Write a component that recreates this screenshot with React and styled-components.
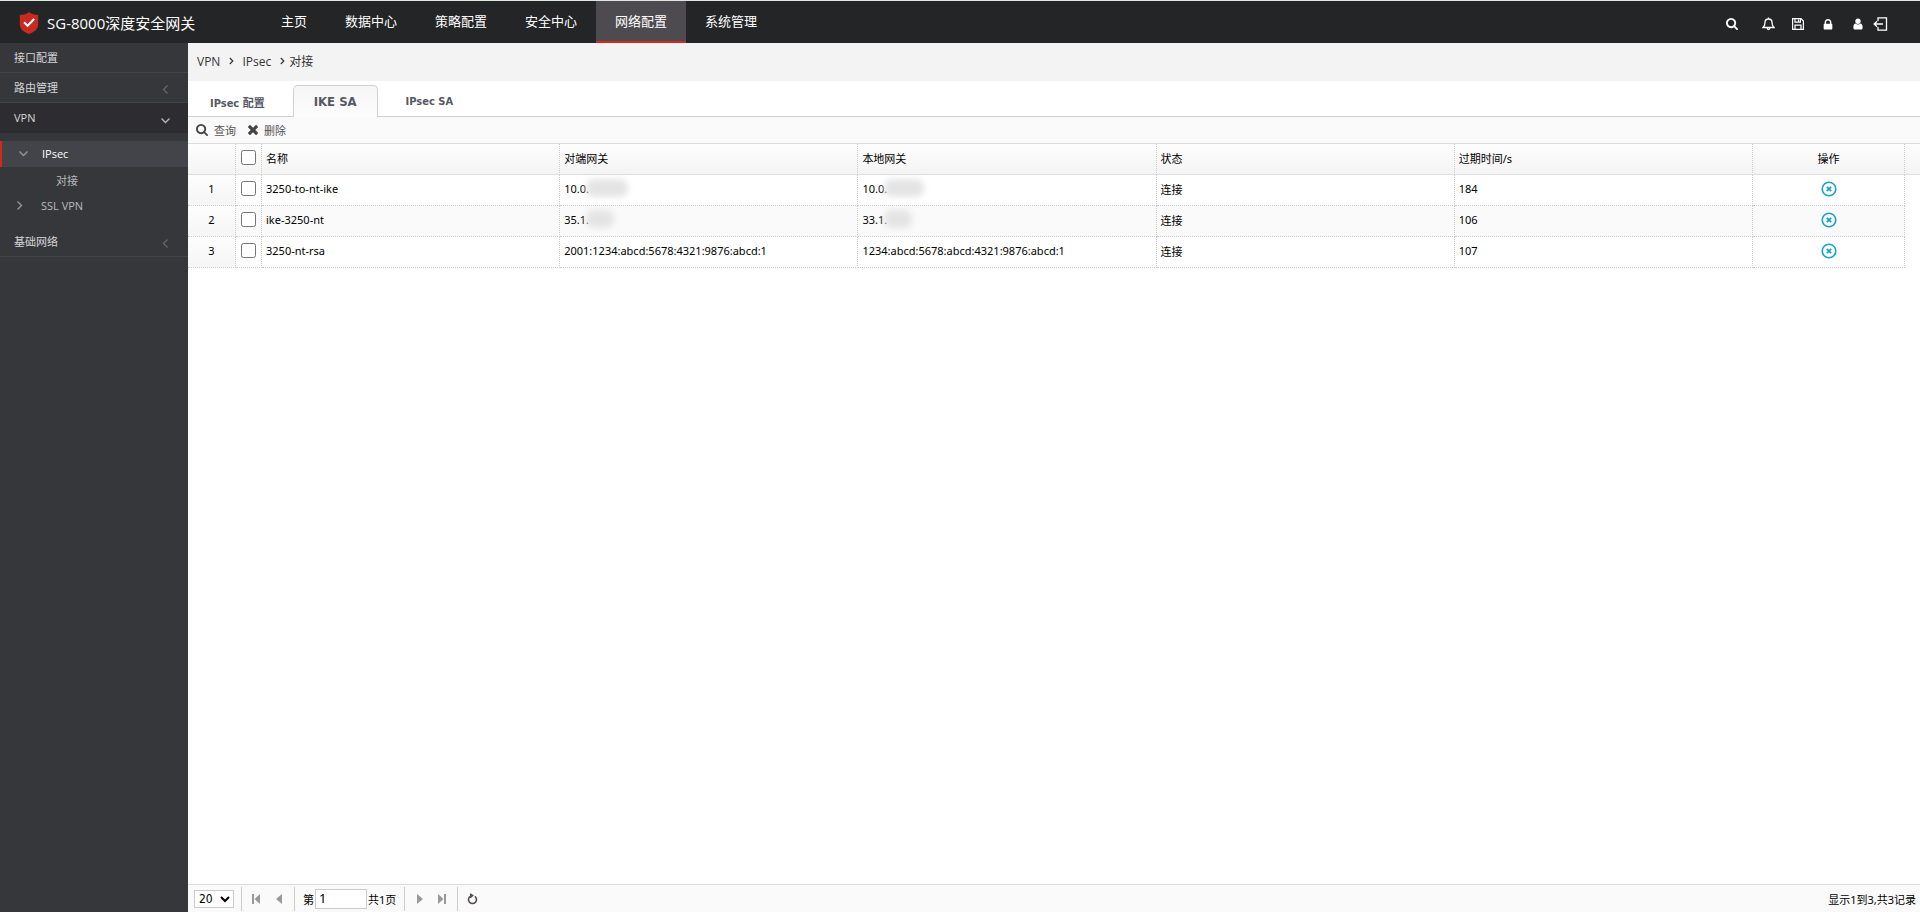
import { useState } from 'react';
import styled, { createGlobalStyle } from 'styled-components';

const GlobalStyle = createGlobalStyle`
    * { box-sizing: border-box; }
    body {
        margin: 0;
        font-family: "Noto Sans", "Noto Sans CJK SC", sans-serif;
        font-size: 11px;
        color: #000;
        background: #fff;
    }
    button, input, select { font-family: inherit; }
    a { color: inherit; text-decoration: none; }
`

const Page = styled.div`
    display: flex;
    flex-direction: column;
    min-height: 100vh;
    border-top: 1px solid #dfe8df;
`

const TopBar = styled.header`
    display: flex;
    height: 42px;
    padding-right: 31px;
    background: #242527;
    color: #fff;
    font-family: "Open Sans", "Noto Sans CJK SC", sans-serif;
`

const Brand = styled.div`
    display: flex;
    align-items: center;
    gap: 8px;
    width: 262px;
    padding: 1px 0 0 19px;
    font-size: 15px;
    white-space: nowrap;
`

const Nav = styled.nav`
    display: flex;
    flex: 1;
`

const NavLink = styled.a`
    padding: 0 19px;
    font-size: 13px;
    line-height: 40px;
    background: ${p => p.$active ? '#4d4b4f' : 'transparent'};
    box-shadow: ${p => p.$active ? 'inset 0 -2px #d4291a' : 'none'};
`

const Tools = styled.div`
    display: flex;
    align-items: center;
    padding-top: 3px;
`

const ToolButton = styled.button`
    display: flex;
    justify-content: center;
    width: ${p => p.$width || 30}px;
    padding: 0;
    margin-right: ${p => p.$gap || 0}px;
    border: 0;
    background: none;
    color: #fff;
`

const Body = styled.div`
    display: flex;
    flex: 1;
`

const Sidebar = styled.aside`
    width: 188px;
    background: #36373b;
    color: #d6d6d8;
    font-family: "Open Sans", "Noto Sans CJK SC", sans-serif;
`

const Group = styled.a`
    display: flex;
    align-items: center;
    justify-content: space-between;
    height: 30px;
    padding: 0 18px 1px 14px;
    border-bottom: ${p => p.$open ? '0' : '1px solid #434448'};
    background: ${p => p.$open ? '#2d2c30' : 'transparent'};

    svg {
        margin-top: 5px;
        color: ${p => p.$open ? '#b5b5b8' : '#66676b'};
    }
`

const SubMenu = styled.div`
    padding: 8px 0;
`

const SubItem = styled.a`
    display: flex;
    align-items: center;
    gap: 14px;
    height: 26px;
    padding: 0 0 1px ${p => p.$indent}px;
    color: ${p => p.$active ? '#fff' : '#b9babd'};
    background: ${p => p.$active ? '#434449' : 'transparent'};
    box-shadow: ${p => p.$active ? 'inset 2px 0 #d4291a' : 'none'};

    svg { color: #94959a; }
`

const Main = styled.main`
    display: flex;
    flex: 1;
    flex-direction: column;
    min-width: 0;
`

const Breadcrumb = styled.div`
    display: flex;
    align-items: center;
    gap: 4px;
    height: 38px;
    padding: 0 0 2px 5px;
    background: #f3f3f3;
    color: #333;
    font-family: "Open Sans", "Noto Sans CJK SC", sans-serif;
    font-size: 12px;

    a { padding: 0 5px 0 4px; }
`

const Tabs = styled.div`
    display: flex;
    align-items: flex-end;
    gap: 6px;
    height: 36px;
    border-bottom: 1px solid #d0d0d0;
`

const Tab = styled.button`
    height: 32px;
    padding: 0 ${p => p.$active ? 20 : 21}px;
    margin-bottom: -1px;
    border: 1px solid ${p => p.$active ? '#d0d0d0' : 'transparent'};
    border-bottom: 0;
    border-radius: 5px 5px 0 0;
    background: ${p => p.$active ? 'linear-gradient(#f6f6f6, #fcfcfc)' : 'none'};
    color: #575765;
    font-family: "DejaVu Sans Condensed", "Noto Sans", "Noto Sans CJK SC", sans-serif;
    font-size: ${p => p.$active ? 13 : 11}px;
    font-weight: bold;
`

const Toolbar = styled.div`
    display: flex;
    align-items: center;
    gap: 12px;
    height: 27px;
    padding: 0 0 1px 8px;
    border-bottom: 1px solid #ddd;
    background: #fafafa;
`

const Action = styled.button`
    display: flex;
    align-items: center;
    gap: 6px;
    padding: 0;
    border: 0;
    background: none;
    color: #555;
    font-size: 11px;

    svg { color: #444; }
`

const Grid = styled.table`
    width: 100%;
    table-layout: fixed;
    border-spacing: 0;
`

const HeadCell = styled.th`
    height: 31px;
    padding: 0 4px 3px;
    border-right: ${p => p.$last ? '0' : '1px dotted #ccc'};
    border-bottom: 1px solid #ddd;
    background: linear-gradient(#fdfdfd, #f4f4f4);
    font-weight: normal;
    text-align: ${p => p.$center ? 'center' : 'left'};
`

const Row = styled.tr`
    background: ${p => p.$odd ? '#fafafa' : '#fff'};
`

const Cell = styled.td`
    height: 31px;
    padding: 0 4px 3px;
    border-right: 1px dotted #ccc;
    border-bottom: 1px dotted #ccc;
    background: ${p => p.$number ? 'linear-gradient(to bottom, #fdfdfd, #f5f5f5)' : 'none'};
    text-align: ${p => p.$center ? 'center' : 'left'};
    white-space: nowrap;
`

const EmptyCell = styled.td`
    background: #fff;
`

const Check = styled.input`
    display: block;
    width: 15px;
    height: 15px;
    margin: 0 auto;
`

const Mask = styled.span`
    display: inline-block;
    width: ${p => p.$width}px;
    height: 18px;
    margin: -6px 0 -2px -3px;
    border-radius: 8px;
    background: #e4e4e4;
    filter: blur(3px);
    vertical-align: middle;
`

const IconButton = styled.button`
    display: block;
    width: 16px;
    height: 16px;
    margin: 0 auto;
    padding: 0;
    border: 0;
    background: none;
    color: #1ba1cf;

    svg { display: block; }
`

const Pager = styled.footer`
    display: flex;
    align-items: center;
    height: 28px;
    margin-top: auto;
    padding: 0 4px 0 6px;
    border-top: 1px solid #ddd;
    background: #fafafa;

    label {
        display: flex;
        align-items: center;
        gap: 1px;
        margin-right: 5px;
    }
`

const PageSize = styled.select`
    width: 40px;
    height: 18px;
    padding: 0;
    margin-right: 4px;
    border: 1px solid #ccc;
    background: #fff;
    font-family: "DejaVu Sans Condensed", sans-serif;
    font-size: 12px;
`

const PageInput = styled.input`
    width: 52px;
    height: 20px;
    padding: 0 3px 2px;
    border: 1px solid #ccc;
    font-size: 13px;
`

const Divider = styled.span`
    width: 1px;
    height: 24px;
    margin: 0 ${p => p.$gap || 3}px 0 3px;
    background: #ccc;
`

const PagerButton = styled.button`
    display: flex;
    justify-content: center;
    width: 23px;
    padding: 0;
    border: 0;
    background: none;
    color: #999;
`

const Summary = styled.span`
    margin-left: auto;
`

// 1792-unit glyph icons
const glyphs = {
  search: ['0 128 1664 1664', 'M1152 832q0-185-131.5-316.5t-316.5-131.5-316.5 131.5-131.5 316.5 131.5 316.5 316.5 131.5 316.5-131.5 131.5-316.5zm512 832q0 52-38 90t-90 38q-54 0-90-38l-343-342q-179 124-399 124-143 0-273.5-55.5t-225-150-150-225-55.5-273.5 55.5-273.5 150-225 225-150 273.5-55.5 273.5 55.5 225 150 150 225 55.5 273.5q0 220-124 399l343 343q37 37 37 90z'],
  times: ['110 366 1188 1188', 'M1298 1322q0 40-28 68l-136 136q-28 28-68 28t-68-28l-294-294-294 294q-28 28-68 28t-68-28l-136-136q-28-28-28-68t28-68l294-294-294-294q-28-28-28-68t28-68l136-136q28-28 68-28t68 28l294 294 294-294q28-28 68-28t68 28l136 136q28 28 28 68t-28 68l-294 294 294 294q28 28 28 68z'],
  lock: ['192 0 1408 1600', 'M640 768h512v-192q0-106-75-181t-181-75-181 75-75 181v192zm832 96v576q0 40-28 68t-68 28h-960q-40 0-68-28t-28-68v-576q0-40 28-68t68-28h32v-192q0-184 132-316t316-132 316 132 132 316v192h32q40 0 68 28t28 68z'],
  user: ['128 64 1536 1664', 'M1536 1399q0 109-62.5 187t-150.5 78h-854q-88 0-150.5-78t-62.5-187q0-85 8.5-160.5t31.5-152 58.5-131 94-89 134.5-34.5q131 128 313 128t313-128q76 0 134.5 34.5t94 89 58.5 131 31.5 152 8.5 160.5zm-256-887q0 159-112.5 271.5t-271.5 112.5-271.5-112.5-112.5-271.5 112.5-271.5 271.5-112.5 271.5 112.5 112.5 271.5z'],
};

function Glyph({ name, size = 12 }) {
  return (
    <svg width={size} height={size} viewBox={glyphs[name][0]} fill="currentColor" aria-hidden="true">
      <path d={glyphs[name][1]} />
    </svg>
  );
}

function Line({ d, w = 12, h = 12, stroke = 1.4, fill = 'none' }) {
  return (
    <svg width={w} height={h} viewBox={`0 0 ${w} ${h}`} fill={fill} stroke="currentColor" strokeWidth={stroke} aria-hidden="true">
      <path d={d} />
    </svg>
  );
}

const ChevronLeft = () => <Line w={9} h={9} stroke={1.2} d="M6.500.5l-4 4 4 4" />;
const ChevronDown = () => <Line w={9} h={9} stroke={1.4} d="M.5 2.500l4 4 4-4" />;
const ChevronRight = () => <Line w={11} h={9} stroke={1.4} d="M1.500.5l4 4-4 4" />;
const Separator = () => <Line w={5} h={8} stroke={1.2} d="M.8 1l3 3-3 3" />;

function Shield() {
  return (
    <svg width="20" height="22" viewBox="0 0 20 22" aria-hidden="true">
      <path d="M10 0c2 2 5.500 3 9.200 3v9c0 5-3.500 8-9.200 10C4.300 20 .8 17 .8 12V3C4.500 3 8 2 10 0z" fill="#c92a20" />
      <path d="M5 10.300l3.600 3.500L15.200 7" fill="none" stroke="#fff" strokeWidth="2" />
    </svg>
  );
}

const menu = ['主页', '数据中心', '策略配置', '安全中心', '网络配置', '系统管理'];

const rows = [
  { name: '3250-to-nt-ike', peer: '10.0.', peerMask: 42, local: '10.0.', localMask: 40, expire: 184 },
  { name: 'ike-3250-nt', peer: '35.1.', peerMask: 28, local: '33.1.', localMask: 28, expire: 106 },
  { name: '3250-nt-rsa', peer: '2001:1234:abcd:5678:4321:9876:abcd:1', local: '1234:abcd:5678:abcd:4321:9876:abcd:1', expire: 107 },
];

function Header() {
  return (
    <TopBar>
      <Brand><Shield />SG-8000深度安全网关</Brand>
      <Nav>
        {menu.map(item => <NavLink key={item} href="#" $active={item === '网络配置'}>{item}</NavLink>)}
      </Nav>
      <Tools>
        <ToolButton aria-label="搜索" $gap={6}><Glyph name="search" /></ToolButton>
        <ToolButton aria-label="通知">
          <Line w={13} h={14} stroke={1.3} d="M1 10.500c1.600-1.300 2-2.800 2-5C3 3.300 4.500 2 6.500 2S10 3.300 10 5.500c0 2.200.4 3.700 2 5zM6.500 2V.5M5.200 11c0 2 2.600 2 2.600 0" />
        </ToolButton>
        <ToolButton aria-label="保存">
          <Line stroke={1.2} d="M.6.600h8.400l2.400 2.400v8.400H.6zM3 .6v3.600h5.400V.6M6.500 1.500v2M3 11.400V7.200h6v4.200" />
        </ToolButton>
        <ToolButton aria-label="锁定"><Glyph name="lock" /></ToolButton>
        <ToolButton aria-label="用户"><Glyph name="user" /></ToolButton>
        <ToolButton aria-label="退出" $width={16}>
          <Line w={16} h={14} stroke={1.3} d="M5 4V.8h8.500v12.400H5V10M1.200 7H10M4 4.300L1.200 7 4 9.700" />
        </ToolButton>
      </Tools>
    </TopBar>
  );
}

function SideMenu() {
  return (
    <Sidebar>
      <Group href="#">接口配置</Group>
      <Group href="#">路由管理<ChevronLeft /></Group>
      <Group href="#" $open>VPN<ChevronDown /></Group>
      <SubMenu>
        <SubItem href="#" $indent={19} $active><ChevronDown />IPsec</SubItem>
        <SubItem href="#" $indent={56}>对接</SubItem>
        <SubItem href="#" $indent={16}><ChevronRight />SSL VPN</SubItem>
      </SubMenu>
      <Group href="#">基础网络<ChevronLeft /></Group>
    </Sidebar>
  );
}

function SaTable() {
  return (
    <Grid>
      <colgroup>
        <col width="48" />
        <col width="26" />
        <col /><col /><col /><col /><col />
        <col width="152" />
        <col width="15" />
      </colgroup>
      <thead>
        <tr>
          <HeadCell />
          <HeadCell><Check type="checkbox" aria-label="全选" /></HeadCell>
          <HeadCell>名称</HeadCell>
          <HeadCell>对端网关</HeadCell>
          <HeadCell>本地网关</HeadCell>
          <HeadCell>状态</HeadCell>
          <HeadCell>过期时间/s</HeadCell>
          <HeadCell $center>操作</HeadCell>
          <HeadCell $last />
        </tr>
      </thead>
      <tbody>
        {rows.map((row, i) => (
          <Row key={row.name} $odd={i % 2 === 1}>
            <Cell $number $center>{i + 1}</Cell>
            <Cell><Check type="checkbox" aria-label={row.name} /></Cell>
            <Cell>{row.name}</Cell>
            <Cell>{row.peer}{row.peerMask && <Mask $width={row.peerMask} />}</Cell>
            <Cell>{row.local}{row.localMask && <Mask $width={row.localMask} />}</Cell>
            <Cell>连接</Cell>
            <Cell>{row.expire}</Cell>
            <Cell $center>
              <IconButton aria-label="断开">
                <svg width="16" height="16" viewBox="0 0 16 16" fill="none" stroke="currentColor" aria-hidden="true">
                  <circle cx="8" cy="8" r="6.800" strokeWidth="1.600" />
                  <path d="M5.800 5.800l4.400 4.400M10.200 5.800l-4.400 4.400" strokeWidth="1.800" />
                </svg>
              </IconButton>
            </Cell>
            <EmptyCell />
          </Row>
        ))}
      </tbody>
    </Grid>
  );
}

function Pagination() {
  const [page, setPage] = useState('1');
  return (
    <Pager>
      <PageSize aria-label="每页条数" defaultValue="20">
        <option>20</option>
        <option>50</option>
      </PageSize>
      <Divider />
      <PagerButton aria-label="首页"><Line w={9} h={10} stroke={0} fill="currentColor" d="M0 0h2v10H0zM8 0v10L2.500 5z" /></PagerButton>
      <PagerButton aria-label="上一页"><Line w={7} h={10} stroke={0} fill="currentColor" d="M6 0v10L0 5z" /></PagerButton>
      <Divider $gap={8} />
      <label>第<PageInput value={page} onChange={e => setPage(e.target.value)} />共1页</label>
      <Divider />
      <PagerButton aria-label="下一页"><Line w={7} h={10} stroke={0} fill="currentColor" d="M1 0v10l6-5z" /></PagerButton>
      <PagerButton aria-label="末页"><Line w={9} h={10} stroke={0} fill="currentColor" d="M6 0h2v10H6zM0 0v10l5.500-5z" /></PagerButton>
      <Divider />
      <PagerButton aria-label="刷新">
        <svg width="11" height="12" viewBox="0 0 11 12" fill="none" stroke="#554f4a" strokeWidth="1.600" aria-hidden="true">
          <path d="M3.200 3.300a4 4 0 1 0 4.600 0" />
          <path d="M3 .5v4.500h.8L7 2.500 3.800.5z" fill="#554f4a" stroke="none" />
        </svg>
      </PagerButton>
      <Summary>显示1到3,共3记录</Summary>
    </Pager>
  );
}

function App() {
  const [tab, setTab] = useState('IKE SA');
  return (
    <Page>
      <GlobalStyle />
      <Header />
      <Body>
        <SideMenu />
        <Main>
          <Breadcrumb>
            <a href="#">VPN</a><Separator /><a href="#">IPsec</a><Separator /><span>对接</span>
          </Breadcrumb>
          <Tabs>
            {['IPsec 配置', 'IKE SA', 'IPsec SA'].map(name => (
              <Tab key={name} $active={tab === name} onClick={() => setTab(name)}>{name}</Tab>
            ))}
          </Tabs>
          <Toolbar>
            <Action><Glyph name="search" />查询</Action>
            <Action><Glyph name="times" size={10} />删除</Action>
          </Toolbar>
          <SaTable />
          <Pagination />
        </Main>
      </Body>
    </Page>
  );
}

export default App;
